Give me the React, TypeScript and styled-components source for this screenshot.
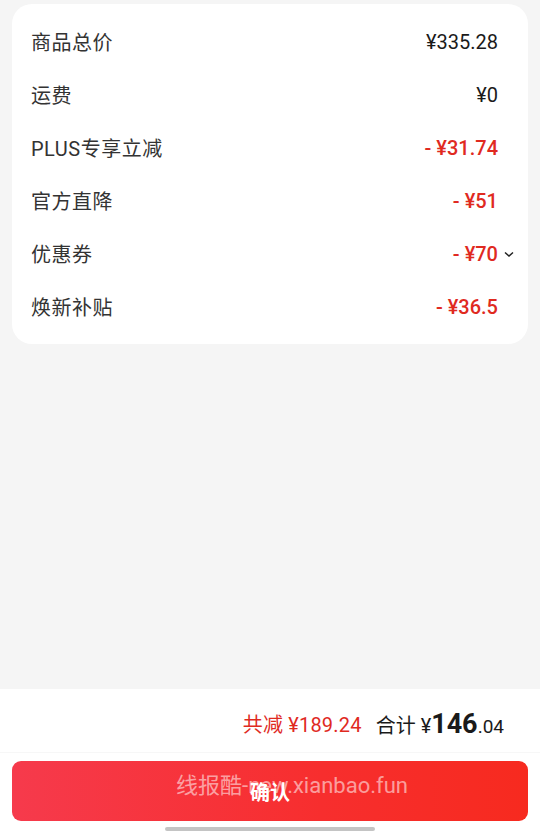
import React from 'react';
import styled, { createGlobalStyle } from 'styled-components';

const GlobalStyle = createGlobalStyle`
  html, body {
    margin: 0;
    padding: 0;
    background: #f5f5f5;
  }
  body {
    font-family: Roboto, "Noto Sans CJK SC", "Noto Sans", sans-serif;
  }
`;

const Page = styled.div`
  width: 540px;
  height: 833px;
  display: flex;
  flex-direction: column;
  background: #f5f5f5;
`;

const Card = styled.div`
  margin: 4px 12px 0;
  background: #fff;
  border-radius: 20px;
  padding: 11px 30px 11px 19px;
  display: flex;
  flex-direction: column;
`;

const Row = styled.div`
  height: 53px;
  display: flex;
  align-items: center;
  justify-content: space-between;
`;

const Label = styled.span`
  font-size: 20px;
  color: #333;
  letter-spacing: 0.5px;
`;

const Value = styled.span<{ $red?: boolean }>`
  font-size: 20px;
  color: ${(p) => (p.$red ? '#e02a1f' : '#1a1a1a')};
  font-weight: ${(p) => (p.$red ? 500 : 400)};
  display: flex;
  align-items: center;
`;

const Chevron = styled.svg`
  width: 12px;
  height: 12px;
  margin-left: 5px;
  margin-right: -17px;
`;

const Spacer = styled.div`
  flex: 1;
`;

const Footer = styled.div`
  background: #fff;
  display: flex;
  flex-direction: column;
`;

const Summary = styled.div`
  height: 64px;
  box-sizing: border-box;
  padding: 6px 36px 0 0;
  display: flex;
  align-items: center;
  justify-content: flex-end;
  border-bottom: 1px solid #f7f7f7;
`;

const Saved = styled.span`
  font-size: 20px;
  color: #e02a1f;
  letter-spacing: 0.2px;
  margin-right: 14px;
`;

const Total = styled.span`
  font-size: 20px;
  color: #1a1a1a;
  display: flex;
  align-items: baseline;
`;

const Big = styled.span`
  font-size: 27px;
  font-weight: 700;
`;

const Small = styled.span`
  font-size: 19px;
`;

const ButtonWrap = styled.div`
  position: relative;
  padding: 8px 12px 6px;
`;

const ConfirmButton = styled.button`
  width: 100%;
  height: 60px;
  border: none;
  border-radius: 9px;
  background: linear-gradient(90deg, #f63a4c 0%, #f72e2e 60%, #f72a1f 100%);
  color: #fff;
  font-size: 20px;
  font-weight: 700;
  font-family: inherit;
  padding: 0;
`;

const Watermark = styled.div`
  position: absolute;
  left: 0;
  right: 0;
  top: 14px;
  padding-left: 44px;
  text-align: center;
  font-size: 22px;
  color: rgba(255, 255, 255, 0.55);
  pointer-events: none;
`;

const HomeBar = styled.div`
  width: 210px;
  height: 4px;
  border-radius: 2px;
  background: #c4c4c4;
  margin: 0 auto 2px;
`;

const rows: { label: string; value: string; red?: boolean; arrow?: boolean }[] = [
  { label: '商品总价', value: '¥335.28' },
  { label: '运费', value: '¥0' },
  { label: 'PLUS专享立减', value: '- ¥31.74', red: true },
  { label: '官方直降', value: '- ¥51', red: true },
  { label: '优惠券', value: '- ¥70', red: true, arrow: true },
  { label: '焕新补贴', value: '- ¥36.5', red: true },
];

export default function App() {
  return (
    <Page>
      <GlobalStyle />
      <Card>
        {rows.map((r) => (
          <Row key={r.label}>
            <Label>{r.label}</Label>
            <Value $red={r.red}>
              {r.value}
              {r.arrow && (
                <Chevron viewBox="0 0 12 12" fill="none" stroke="#222" strokeWidth="1.5">
                  <path d="M2 4.5l4 3.5 4-3.5" />
                </Chevron>
              )}
            </Value>
          </Row>
        ))}
      </Card>
      <Spacer />
      <Footer>
        <Summary>
          <Saved>共减 ¥189.24</Saved>
          <Total>
            合计 ¥<Big>146</Big>
            <Small>.04</Small>
          </Total>
        </Summary>
        <ButtonWrap>
          <ConfirmButton>确认</ConfirmButton>
          <Watermark>线报酷-new.xianbao.fun</Watermark>
        </ButtonWrap>
        <HomeBar />
      </Footer>
    </Page>
  );
}
